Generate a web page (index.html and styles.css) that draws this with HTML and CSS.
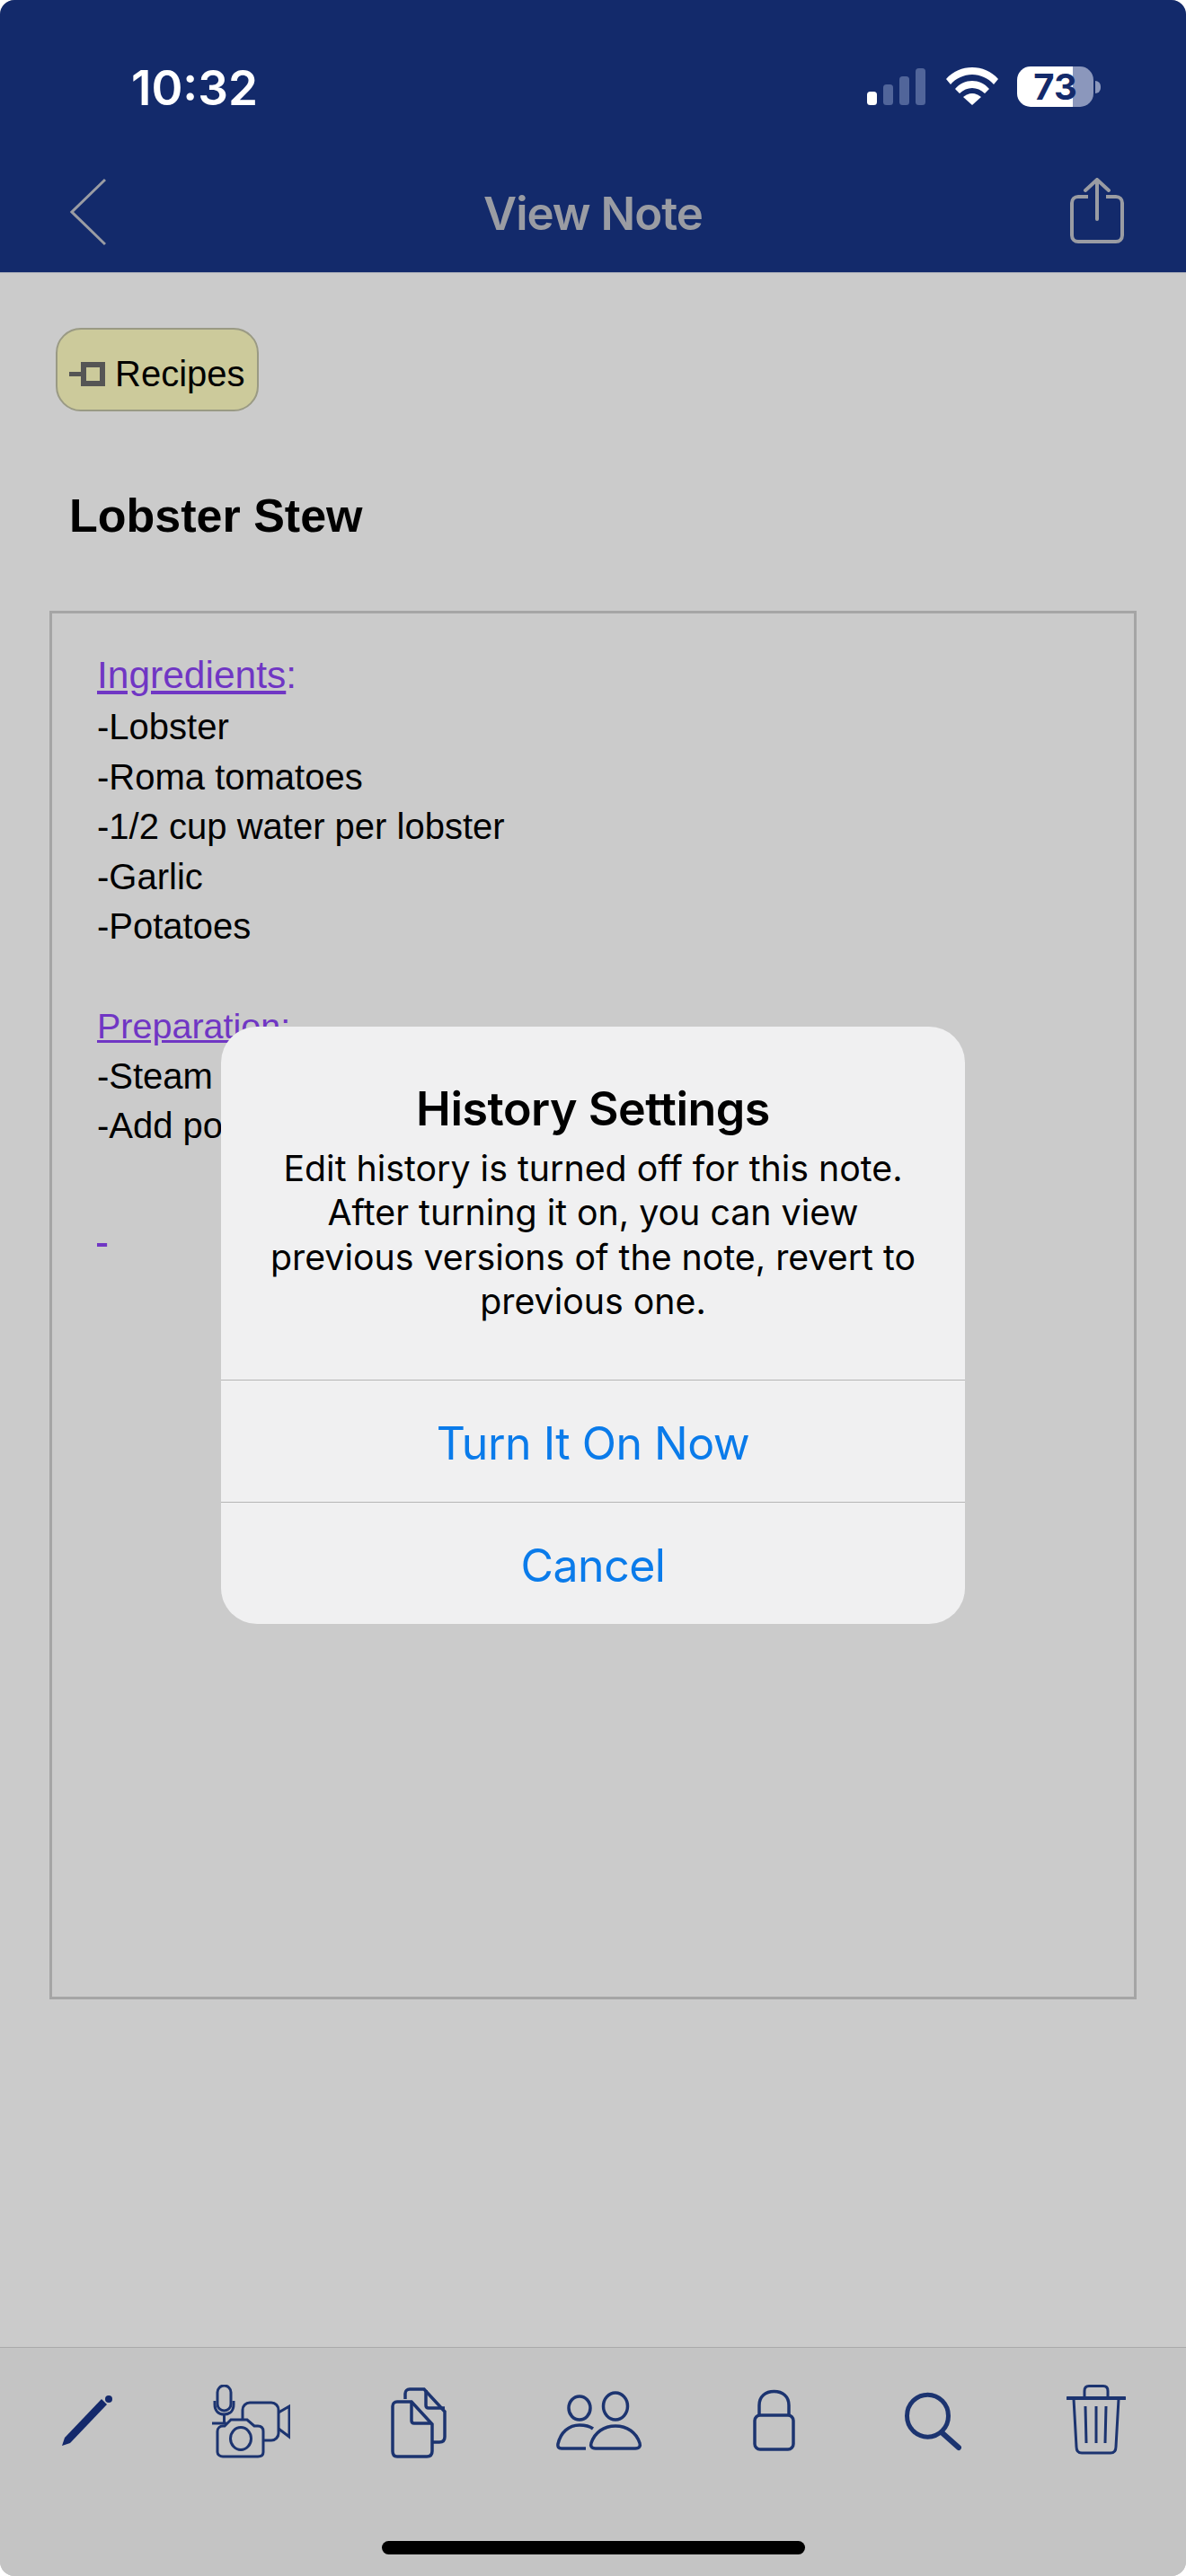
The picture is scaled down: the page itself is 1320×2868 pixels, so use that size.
FILE: index.html
```html
<!DOCTYPE html>
<html lang="en">
<head>
    <meta charset="UTF-8">
    <meta name="viewport" content="width=device-width, initial-scale=1.0">
    <title>View Note</title>
    <link rel="stylesheet" href="styles.css">
</head>
<body>
    <div class="screen">
        <div class="topbar">
            <div class="status-bar">
                <span class="clock">10:32</span>
                <div class="status-icons">
                    <svg class="signal" width="65" height="41" viewBox="0 0 65 41">
                        <rect x="0" y="26" width="11" height="15" rx="3.5" fill="#fff"/>
                        <rect x="18" y="18" width="11" height="23" rx="3.5" fill="#51659a"/>
                        <rect x="36" y="9" width="11" height="32" rx="3.5" fill="#51659a"/>
                        <rect x="54" y="0" width="11" height="41" rx="3.5" fill="#51659a"/>
                    </svg>
                    <svg class="wifi" width="58" height="42" viewBox="0 0 58 42">
                        <path d="M29 0C18 0 8 4 0 13L5 19C11 12 20 8 29 8S47 12 53 19L58 13C50 4 40 0 29 0Z" fill="#fff"/>
                        <path d="M29 15C22 15 15 18 10 24L15 29C19 25 24 23 29 23S39 25 43 29L48 24C43 18 36 15 29 15Z" fill="#fff"/>
                        <path d="M29 29C25 29 22 31 19 33L29 42L39 33C36 31 33 29 29 29Z" fill="#fff"/>
                    </svg>
                    <div class="battery">
                        <div class="battery-body"><span class="battery-level">73</span></div>
                        <div class="battery-nub"></div>
                    </div>
                </div>
            </div>
            <div class="navbar">
                <svg class="back" width="40" height="76" viewBox="0 0 40 76">
                    <path d="M39 2L2 38L39 74" fill="none" stroke="#9a9ca3" stroke-width="3"/>
                </svg>
                <div class="nav-title">View Note</div>
                <svg class="share" width="60" height="74" viewBox="0 0 60 74">
                    <path d="M20 21H9C5 21 2 24 2 28V64C2 68 5 71 9 71H51C55 71 58 68 58 64V28C58 24 55 21 51 21H40" fill="none" stroke="#9a9ca3" stroke-width="4"/>
                    <path d="M30 46V3M17 14L30 2L43 14" fill="none" stroke="#9a9ca3" stroke-width="4" stroke-linecap="round"/>
                </svg>
            </div>
        </div>

        <div class="content">
            <div class="folder-chip">
                <svg width="40" height="27" viewBox="0 0 40 27">
                    <path d="M0 13.500H14" stroke="#555" stroke-width="5"/>
                    <rect x="16" y="3" width="21" height="21" fill="none" stroke="#555" stroke-width="6"/>
                </svg>
                <span>Recipes</span>
            </div>
            <h1 class="note-title">Lobster Stew</h1>
            <div class="note-box">
                <p class="note-head"><u>Ingredients</u>:</p>
                <p>-Lobster</p>
                <p>-Roma tomatoes</p>
                <p>-1/2 cup water per lobster</p>
                <p>-Garlic</p>
                <p>-Potatoes</p>
                <p>&nbsp;</p>
                <p class="note-head note-head-small"><u>Preparation</u>:</p>
                <p>-Steam</p>
                <p>-Add potatoes</p>
                <p>&nbsp;</p>
                <p class="note-dash"><u>&nbsp;</u></p>
            </div>
        </div>

        <div class="toolbar">
            <svg class="tool tool-pencil" width="56" height="82" viewBox="0 0 56 82">
                <path d="M0 68L3 59L44 16L50 22L9 65Z" fill="#14296b"/>
                <circle cx="52" cy="16" r="4" fill="#14296b"/>
            </svg>
            <svg class="tool tool-media" width="87" height="82" viewBox="0 0 87 82" fill="none" stroke="#1c3470" stroke-width="3">
                <rect x="34" y="20" width="40" height="42" rx="8"/>
                <path d="M74 31L86 24V58L74 49"/>
                <path d="M6 52C6 48 9 46 12 46H14L21 39H39L47 46H51C55 46 57 48 57 52V75C57 78 55 80 51 80H12C9 80 6 78 6 75Z" fill="#c4c4c4"/>
                <ellipse cx="32" cy="60" rx="11.500" ry="12.500"/>
                <rect x="6" y="1" width="15" height="28" rx="7.500"/>
                <path d="M3 18V22C3 29 7 33 13.500 33S24 29 24 22V18"/>
                <path d="M13.500 33V44M0 43H16"/>
            </svg>
            <svg class="tool tool-docs" width="62" height="82" viewBox="0 0 62 82" fill="none" stroke="#1c3470" stroke-width="3.500">
                <path d="M16 16V10C16 7 18 5 21 5H37L60 30V58C60 62 58 64 54 64H47"/>
                <path d="M39 6V23C39 25 40 26 42 26H60"/>
                <path d="M7 19H23L46 44V74C46 78 44 80 40 80H7C4 80 2 78 2 74V24C2 21 4 19 7 19Z" fill="#c4c4c4"/>
                <path d="M23 20V40C23 42 24 43 26 43H45"/>
            </svg>
            <svg class="tool tool-people" width="97" height="82" viewBox="0 0 97 82" fill="none" stroke="#1c3470" stroke-width="3.500">
                <ellipse cx="26" cy="26" rx="12" ry="13"/>
                <path d="M33 71H6C2.500 71 1.500 69 2 66C5 53 14 45 26 45C32 45 37 46 41 49"/>
                <ellipse cx="66" cy="24" rx="13.500" ry="15"/>
                <path d="M44 71C39 71 38 68 39 65C43 53 53 46 66 46C79 46 89 53 93 65C94 68 93 71 88 71Z"/>
            </svg>
            <svg class="tool tool-lock" width="47" height="82" viewBox="0 0 47 82" fill="none" stroke="#1c3470" stroke-width="3.500">
                <path d="M7 34V23C7 13 14 7.500 23.500 7.500S40 13 40 23V34"/>
                <rect x="2" y="34" width="43" height="38" rx="6"/>
            </svg>
            <svg class="tool tool-search" width="63" height="82" viewBox="0 0 63 82" fill="none" stroke="#1c3470">
                <ellipse cx="25.500" cy="34.700" rx="23" ry="23.500" stroke-width="5"/>
                <path d="M42 54L60 70" stroke-width="6" stroke-linecap="round"/>
            </svg>
            <svg class="tool tool-trash" width="66" height="82" viewBox="0 0 66 82" fill="none" stroke="#1c3470" stroke-width="3">
                <path d="M20 15V7C20 3 22 1.500 25 1.500H41C44 1.500 46 3 46 7V15"/>
                <path d="M1 15H65" stroke-width="4" stroke-linecap="round"/>
                <path d="M8 16L11 69C11 74 13 76 17 76H49C53 76 55 74 55 69L58 16"/>
                <path d="M21 24L22 65M33 24V65M44 24L43 65"/>
            </svg>
        </div>

        <div class="home-bar"></div>

        <div class="alert">
            <div class="alert-text">
                <div class="alert-title">History Settings</div>
                <div class="alert-msg">Edit history is turned off for this note.<br>After turning it on, you can view<br>previous versions of the note, revert to<br>previous one.</div>
            </div>
            <div class="alert-btn">Turn It On Now</div>
            <div class="alert-btn">Cancel</div>
        </div>
    </div>
</body>
</html>
```

FILE: styles.css
```css
html, body {
    margin: 0;
    padding: 0;
    background: #fff;
}

.screen {
    position: relative;
    width: 1320px;
    height: 2868px;
    display: flex;
    flex-direction: column;
    background: #cbcbcb;
    border-radius: 16px;
    overflow: hidden;
    font-family: "Liberation Sans", Arial, sans-serif;
    color: #000;
}

/* top bar */
.topbar {
    height: 303px;
    flex: none;
    background: #132a6b;
    border-bottom: 1px solid #a8acb8;
}

.status-bar {
    display: flex;
    justify-content: space-between;
    padding: 74px 95px 0 146px;
    height: 120px;
    box-sizing: border-box;
}

.clock {
    font-family: Inter, sans-serif;
    font-weight: 600;
    font-size: 53px;
    line-height: 48px;
    letter-spacing: 0;
    color: #fff;
}

.status-icons {
    display: flex;
    align-items: flex-start;
}

.signal {
    margin: 2px 23px 0 0;
}

.wifi {
    margin: 1px 21px 0 0;
}

.battery {
    display: flex;
    align-items: center;
    height: 45px;
}

.battery-body {
    width: 85px;
    height: 45px;
    border-radius: 15px;
    background: linear-gradient(to right, #fff 73%, #8b97bc 73%);
    text-align: center;
}

.battery-level {
    font-family: Inter, sans-serif;
    font-weight: 700;
    font-size: 40px;
    line-height: 45px;
    color: #132a6b;
}

.battery-nub {
    width: 6px;
    height: 14px;
    margin-left: 2px;
    border-radius: 0 7px 7px 0;
    background: #8b97bc;
}

.navbar {
    position: relative;
    display: flex;
    justify-content: space-between;
    align-items: flex-start;
    padding: 78px 69px 0 78px;
}

.nav-title {
    position: absolute;
    left: 0;
    right: 0;
    top: 88px;
    text-align: center;
    font-family: Inter, sans-serif;
    font-weight: 600;
    font-size: 51px;
    line-height: 60px;
    letter-spacing: -1px;
    color: #9a9ca3;
}

/* note content */
.content {
    flex: 1;
    padding: 61px 55px 0;
}

.folder-chip {
    display: flex;
    align-items: center;
    gap: 11px;
    box-sizing: border-box;
    width: 226px;
    height: 93px;
    margin-left: 7px;
    padding: 10px 0 0 13px;
    background: #ccca9b;
    border: 2px solid #9a9a84;
    border-radius: 28px;
    font-size: 40px;
}

.note-title {
    margin: 85px 0 0 22px;
    font-size: 52px;
    line-height: 62px;
    font-weight: bold;
}

.note-box {
    box-sizing: border-box;
    width: 1210px;
    height: 1546px;
    margin-top: 75px;
    padding: 39px 50px;
    border: 3px solid #a5a5a5;
}

.note-box p {
    margin: 0;
    font-size: 40px;
    line-height: 55.500px;
}

.note-box .note-head {
    font-size: 42.500px;
    line-height: 60px;
    color: #7036c4;
}

.note-box .note-head-small {
    font-size: 39.500px;
    line-height: 55.500px;
}

.note-box .note-dash {
    margin-top: 4px;
    color: #7036c4;
}

/* bottom toolbar */
.toolbar {
    height: 255px;
    flex: none;
    display: flex;
    align-items: flex-start;
    box-sizing: border-box;
    padding: 41px 0 0 69px;
    background: #c4c4c4;
    border-top: 1px solid #aaa;
}

.tool-media { margin-left: 111px; }
.tool-docs { margin-left: 112px; }
.tool-people { margin-left: 122px; }
.tool-lock { margin-left: 122px; }
.tool-search { margin-left: 122px; }
.tool-trash { margin-left: 117px; }

.home-bar {
    position: absolute;
    left: 425px;
    bottom: 24px;
    width: 471px;
    height: 15px;
    border-radius: 8px;
    background: #000;
}

/* alert dialog */
.alert {
    position: absolute;
    left: 246px;
    top: 1143px;
    width: 828px;
    height: 665px;
    display: flex;
    flex-direction: column;
    background: #f0f0f1;
    border-radius: 40px;
    text-align: center;
    font-family: Inter, sans-serif;
}

.alert-text {
    height: 394px;
    box-sizing: border-box;
    padding-top: 62px;
}

.alert-title {
    font-size: 52px;
    line-height: 60px;
    font-weight: 600;
    letter-spacing: -0.500px;
}

.alert-msg {
    margin-top: 11px;
    font-size: 39.300px;
    line-height: 49.300px;
}

.alert-btn {
    height: 135px;
    border-top: 1px solid #b5b5b5;
    font-size: 50px;
    line-height: 140px;
    letter-spacing: -0.500px;
    color: #0a7bea;
}
```
